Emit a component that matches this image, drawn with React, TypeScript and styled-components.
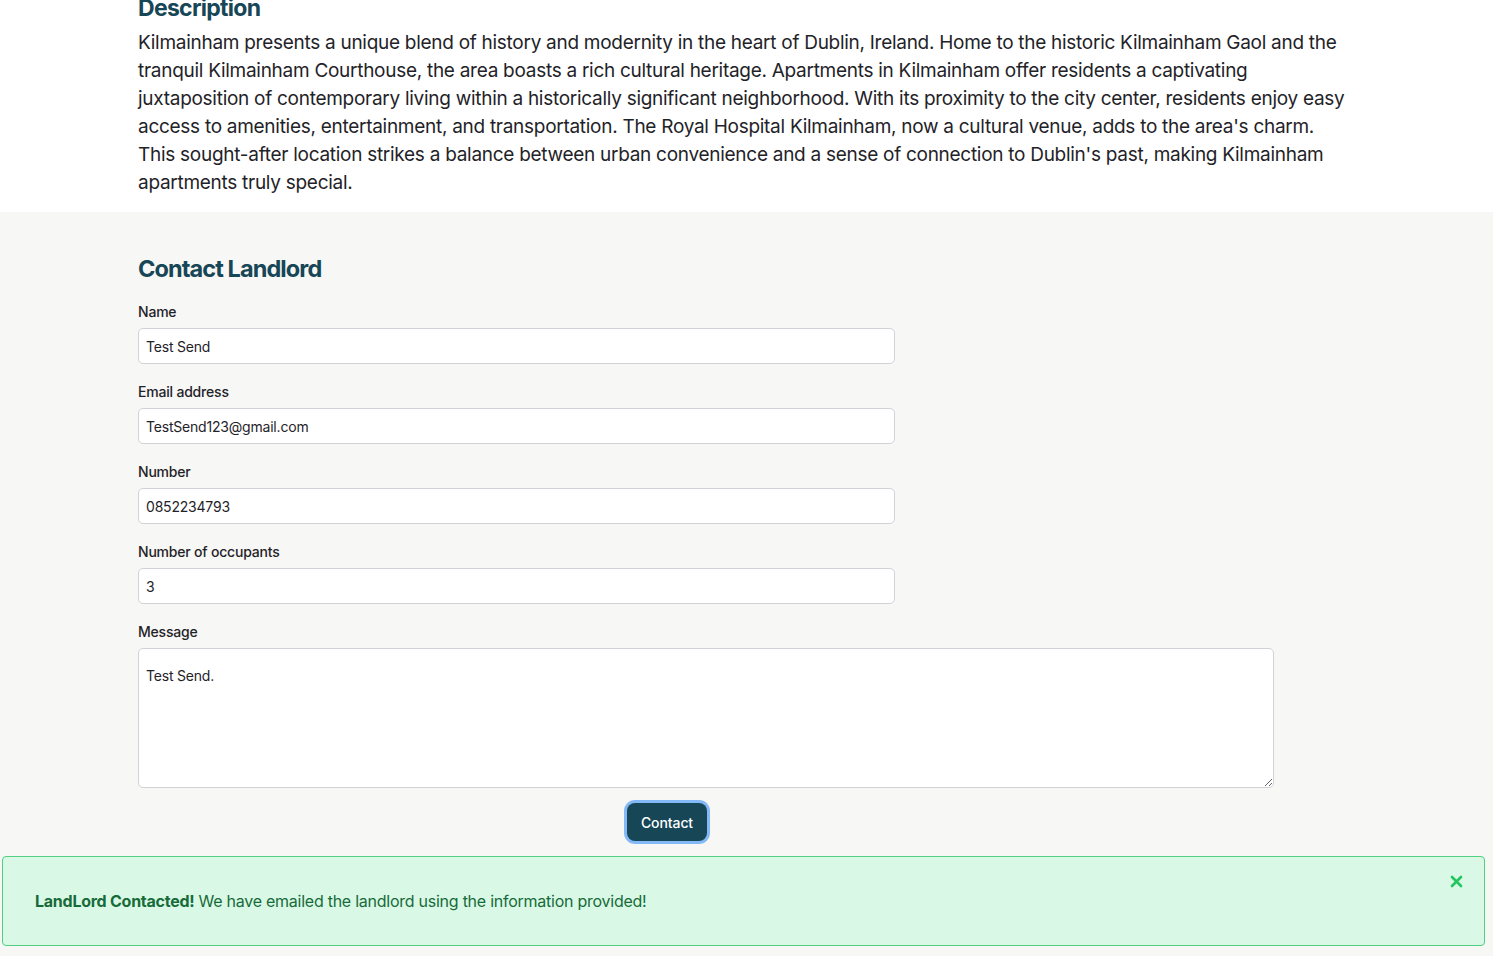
import React from "react";
import styled, { createGlobalStyle } from "styled-components";

const Global = createGlobalStyle`
  html, body { margin: 0; padding: 0; background: #ffffff; }
  body { font-family: Inter, "Noto Sans", sans-serif; color: #1f2328; }
  * { box-sizing: border-box; }
`;

const Page = styled.div`
  width: 1493px;
  height: 956px;
  overflow: hidden;
  display: flex;
  flex-direction: column;
`;

const DescSection = styled.section`
  background: #ffffff;
  padding: 0 138px 15px 138px;
  margin-top: -7px;
`;

const DescTitle = styled.h2`
  margin: 0 0 6px 0;
  font-size: 23px;
  line-height: 30px;
  font-weight: 700;
  color: #174657;
  letter-spacing: -0.7px;
`;

const DescText = styled.p`
  margin: 0;
  font-size: 19px;
  line-height: 28px;
  color: #1f2328;
  max-width: 1207px;
  letter-spacing: -0.28px;
`;

const ContactSection = styled.section`
  flex: 1;
  background: #f7f7f5;
  padding: 42px 0 0 0;
  display: flex;
  flex-direction: column;
`;

const Inner = styled.div`
  padding: 0 0 0 138px;
`;

const ContactTitle = styled.h2`
  margin: 0 0 18px 0;
  font-size: 23.5px;
  line-height: 30px;
  font-weight: 700;
  color: #174657;
  letter-spacing: -0.9px;
`;

const Form = styled.form`
  display: flex;
  flex-direction: column;
`;

const Field = styled.div<{ $wide?: boolean }>`
  display: flex;
  flex-direction: column;
  gap: 6px;
  width: ${(p) => (p.$wide ? "1136px" : "757px")};
  margin-bottom: ${(p) => (p.$wide ? "15px" : "18px")};
`;

const Label = styled.label`
  font-size: 14px;
  line-height: 20px;
  font-weight: 500;
  color: #1f2328;
  letter-spacing: -0.2px;
`;

const Input = styled.input`
  height: 36px;
  width: 100%;
  border: 1px solid #cfd3d8;
  border-radius: 5px;
  background: #ffffff;
  padding: 0 7px;
  font-family: Inter, "Noto Sans", sans-serif;
  font-size: 14px;
  letter-spacing: -0.2px;
  color: #1f2328;
  outline: none;
`;

const TextArea = styled.textarea`
  height: 140px;
  width: 100%;
  border: 1px solid #cfd3d8;
  border-radius: 5px;
  background: #ffffff;
  padding: 17px 7px;
  font-family: Inter, "Noto Sans", sans-serif;
  font-size: 14px;
  letter-spacing: -0.2px;
  line-height: 20px;
  color: #1f2328;
  outline: none;
  resize: vertical;
`;

const ButtonRow = styled.div`
  width: 1058px;
  display: flex;
  justify-content: center;
`;

const Button = styled.button`
  height: 38px;
  padding: 0 14px;
  border: none;
  border-radius: 8px;
  background: #174657;
  color: #ffffff;
  font-family: Inter, "Noto Sans", sans-serif;
  font-size: 14px;
  font-weight: 500;
  letter-spacing: -0.1px;
  box-shadow: 0 0 0 3px #84b9f7;
  cursor: pointer;
`;

const Alert = styled.div`
  margin: 15px 8px 10px 2px;
  height: 90px;
  border: 1px solid #4fd17f;
  border-radius: 4px;
  background: #d9f9e6;
  display: flex;
  align-items: center;
  padding: 0 32px 0 32px;
  position: relative;
  font-size: 16px;
  letter-spacing: -0.25px;
  color: #176b3a;
`;

const Strong = styled.strong`
  font-weight: 700;
  margin-right: 4px;
`;

const Close = styled.button`
  position: absolute;
  top: 16px;
  right: 20px;
  background: none;
  border: none;
  padding: 0;
  width: 16px;
  height: 16px;
  display: flex;
  align-items: center;
  justify-content: center;
  cursor: pointer;
`;

export default function App() {
  return (
    <Page>
      <Global />
      <DescSection>
        <DescTitle>Description</DescTitle>
        <DescText>
          Kilmainham presents a unique blend of history and modernity in the heart of Dublin, Ireland. Home to the
          historic Kilmainham Gaol and the tranquil Kilmainham Courthouse, the area boasts a rich cultural heritage.
          Apartments in Kilmainham offer residents a captivating juxtaposition of contemporary living within a
          historically significant neighborhood. With its proximity to the city center, residents enjoy easy access to
          amenities, entertainment, and transportation. The Royal Hospital Kilmainham, now a cultural venue, adds to the
          area's charm. This sought-after location strikes a balance between urban convenience and a sense of
          connection to Dublin's past, making Kilmainham apartments truly special.
        </DescText>
      </DescSection>
      <ContactSection>
        <Inner>
          <ContactTitle>Contact Landlord</ContactTitle>
          <Form onSubmit={(e) => e.preventDefault()}>
            <Field>
              <Label>Name</Label>
              <Input defaultValue="Test Send" />
            </Field>
            <Field>
              <Label>Email address</Label>
              <Input defaultValue="TestSend123@gmail.com" />
            </Field>
            <Field>
              <Label>Number</Label>
              <Input defaultValue="0852234793" />
            </Field>
            <Field>
              <Label>Number of occupants</Label>
              <Input defaultValue="3" />
            </Field>
            <Field $wide>
              <Label>Message</Label>
              <TextArea defaultValue="Test Send." />
            </Field>
            <ButtonRow>
              <Button type="submit">Contact</Button>
            </ButtonRow>
          </Form>
        </Inner>
        <Alert>
          <Strong>LandLord Contacted!</Strong> We have emailed the landlord using the information provided!
          <Close aria-label="close">
            <svg width="13" height="13" viewBox="0 0 13 13">
              <path d="M2 2 L11 11 M11 2 L2 11" stroke="#22c55e" strokeWidth="2.6" strokeLinecap="round" />
            </svg>
          </Close>
        </Alert>
      </ContactSection>
    </Page>
  );
}
